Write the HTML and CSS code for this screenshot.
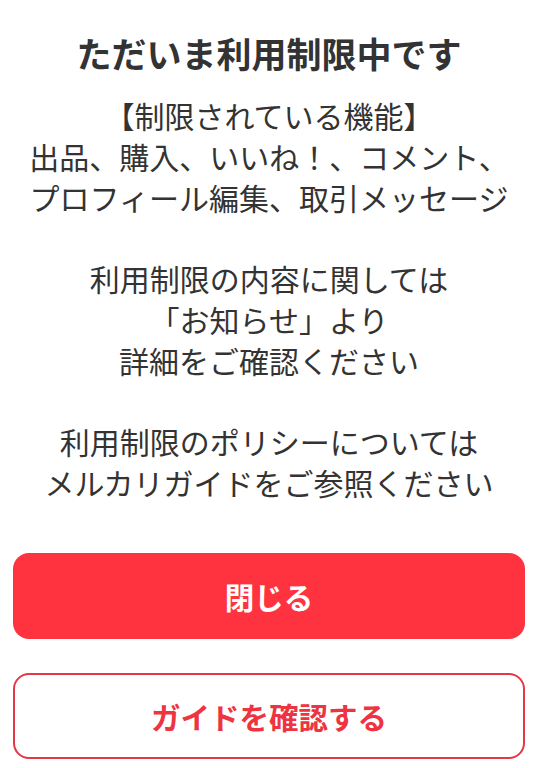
FILE: index.html
```html
<!DOCTYPE html>
<html lang="ja">
<head>
<meta charset="utf-8">
<link rel="stylesheet" href="styles.css">
</head>
<body>
<div class="dialog">
  <h1 class="title">ただいま利用制限中です</h1>
  <div class="body">
    <p class="para">【制限されている機能】<br>出品、購入、いいね！、コメント、<br>プロフィール編集、取引メッセージ</p>
    <p class="para">利用制限の内容に関しては<br>「お知らせ」より<br>詳細をご確認ください</p>
    <p class="para">利用制限のポリシーについては<br>メルカリガイドをご参照ください</p>
  </div>
  <div class="actions">
    <button class="btn btn-primary">閉じる</button>
    <button class="btn btn-outline">ガイドを確認する</button>
  </div>
</div>
</body>
</html>
```
FILE: styles.css
```css
html, body {
  margin: 0;
  padding: 0;
  background: #ffffff;
}
.dialog {
  width: 538px;
  box-sizing: border-box;
  padding: 29px 13px 0 13px;
  font-family: "Noto Sans CJK JP", "Noto Sans", sans-serif;
  color: #333333;
  text-align: center;
}
.title {
  margin: 0;
  font-size: 35px;
  line-height: 48px;
  font-weight: 700;
  letter-spacing: 0;
}
.body {
  margin-top: 18px;
  display: flex;
  flex-direction: column;
  gap: 40.8px;
}
.para {
  margin: 0;
  font-size: 30px;
  line-height: 40.8px;
  font-weight: 400;
  white-space: nowrap;
}
.actions {
  margin-top: 50px;
  display: flex;
  flex-direction: column;
  gap: 34px;
}
.btn {
  display: block;
  width: 100%;
  height: 86px;
  box-sizing: border-box;
  border-radius: 16px;
  font-family: "Noto Sans CJK JP", "Noto Sans", sans-serif;
  font-size: 29.5px;
  font-weight: 700;
  padding: 0;
  cursor: pointer;
}
.btn-primary {
  background: #ff333f;
  color: #ffffff;
  border: none;
}
.btn-outline {
  background: #ffffff;
  color: #ee3341;
  border: 2px solid #e43846;
}
```
